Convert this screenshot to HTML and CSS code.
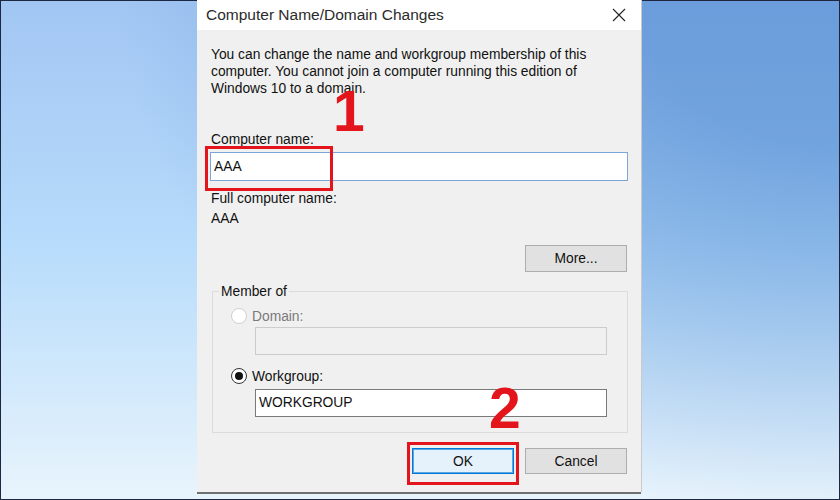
FILE: index.html
```html
<!DOCTYPE html>
<html>
<head>
<meta charset="utf-8">
<link rel="stylesheet" href="styles.css">
</head>
<body>
<div class="screen">
  <div class="dialog">
    <div class="titlebar">
      <span class="title">Computer Name/Domain Changes</span>
      <svg class="close" width="14" height="14" viewBox="0 0 14 14"><path d="M1 1 L13 13 M13 1 L1 13" stroke="#222" stroke-width="1.1" fill="none"/></svg>
    </div>
    <div class="body">
      <p class="intro">You can change the name and workgroup membership of this computer. You cannot join a computer running this edition of Windows 10 to a domain.</p>
      <div class="label first">Computer name:</div>
      <div class="input focused">AAA</div>
      <div class="info">Full computer name:</div>
      <div class="info">AAA</div>
      <div class="right-row more-row"><button class="btn">More...</button></div>
      <fieldset class="group">
        <legend>Member of</legend>
        <div class="radio-row disabled"><span class="radio"></span><span>Domain:</span></div>
        <div class="input sub disabled-input"></div>
        <div class="radio-row wg"><span class="radio checked"></span><span>Workgroup:</span></div>
        <div class="input sub plain">WORKGROUP</div>
      </fieldset>
      <div class="right-row actions">
        <button class="btn ok">OK</button>
        <button class="btn">Cancel</button>
      </div>
    </div>
    <div class="mark mark1"></div>
    <div class="mark mark2"></div>
    <div class="num num1">1</div>
    <div class="num num2">2</div>
  </div>
</div>
</body>
</html>
```
FILE: styles.css
```css
html, body {
  margin: 0;
  padding: 0;
}
body {
  width: 840px;
  height: 500px;
  overflow: hidden;
  font-family: "Liberation Sans", Arial, sans-serif;
}
.screen {
  box-sizing: border-box;
  width: 840px;
  height: 500px;
  border: 1px solid #1e2642;
  padding-left: 196px;
  background:
    radial-gradient(ellipse 720px 520px at 100% 0%, rgba(42,108,192,0.46) 28%, rgba(42,108,192,0) 100%),
    linear-gradient(to bottom, #a2c6f3 0%, #b8dcfb 50%, #e8f4fc 100%);
}
.dialog {
  position: relative;
  width: 444px;
  height: 492px;
  margin-top: -1px;
  background: #f0f0f0;
  box-shadow: 0 2px 0 #707070, 1px 0 0 #c9c9c9;
}
.titlebar {
  height: 30px;
  background: #ffffff;
  display: flex;
  align-items: center;
  justify-content: space-between;
  padding: 0 15px 0 9px;
}
.title {
  font-size: 15.5px;
  color: #2b2b2b;
}
.close {
  display: block;
}
.body {
  padding: 0 13px 0 14px;
  font-size: 13.8px;
  color: #111;
}
.intro {
  margin: 16px 0 0;
  line-height: 17px;
}
.label {
  line-height: 17px;
}
.label.first {
  margin-top: 34px;
}
.input {
  box-sizing: border-box;
  height: 29px;
  background: #fff;
  border: 1px solid #7a7a7a;
  line-height: 27px;
  padding-left: 3px;
}
.input.focused {
  margin: 4px 0 0 -1px;
  width: 418px;
  border-color: #7aa6d9;
}
.info {
  line-height: 20px;
}
.input.focused + .info {
  margin-top: 8px;
}
.right-row {
  display: flex;
  justify-content: flex-end;
  gap: 11px;
  padding-right: 1px;
}
.more-row {
  margin-top: 16px;
}
.btn {
  box-sizing: border-box;
  width: 102px;
  height: 27px;
  background: #e1e1e1;
  border: 1px solid #adadad;
  font-family: "Liberation Sans", Arial, sans-serif;
  font-size: 13.8px;
  color: #111;
  padding: 0;
  margin: 0;
}
.btn.ok {
  background: #e5f1fb;
  border: 1px solid #0078d7;
  box-shadow: inset 0 0 0 1px #5aa7e6;
}
.group {
  margin: 11px 0 0 1px;
  padding: 0 0 15px 0;
  border: 1px solid #dcdcdc;
  min-width: 0;
}
.group legend {
  margin-left: 6px;
  padding: 0 2px;
  line-height: 17px;
  color: #111;
}
.radio-row {
  display: flex;
  align-items: center;
  gap: 5px;
  height: 20px;
  padding-left: 18px;
}
.radio-row.disabled {
  margin-top: 6px;
  color: #7a7a7a;
}
.radio-row.wg {
  margin-top: 11px;
}
.radio {
  box-sizing: border-box;
  width: 16px;
  height: 16px;
  border-radius: 50%;
  background: #fff;
  border: 1px solid #cfcfcf;
  display: flex;
  align-items: center;
  justify-content: center;
}
.radio.checked {
  border-color: #333;
}
.radio.checked::after {
  content: "";
  width: 8px;
  height: 8px;
  border-radius: 50%;
  background: #111;
}
.input.sub {
  margin-left: 42px;
  width: 352px;
  height: 28px;
  line-height: 26px;
}
.disabled-input {
  margin-top: 1px;
  background: #f0f0f0;
  border-color: #cccccc;
}
.input.plain {
  margin-top: 3px;
  border-color: #7a7a7a;
}
.actions {
  margin-top: 15px;
}
.actions .btn {
  height: 26px;
}
.mark {
  position: absolute;
  box-sizing: border-box;
  border: 3px solid #e3141c;
}
.mark1 {
  left: 8px;
  top: 146px;
  width: 128px;
  height: 45px;
}
.mark2 {
  left: 210px;
  top: 442px;
  width: 112px;
  height: 43px;
}
.num {
  position: absolute;
  font-family: "Liberation Sans", Arial, sans-serif;
  font-weight: bold;
  font-size: 57px;
  line-height: 57px;
  color: #e3141c;
}
.num1 {
  left: 136px;
  top: 83px;
}
.num2 {
  left: 292px;
  top: 380px;
}
```
